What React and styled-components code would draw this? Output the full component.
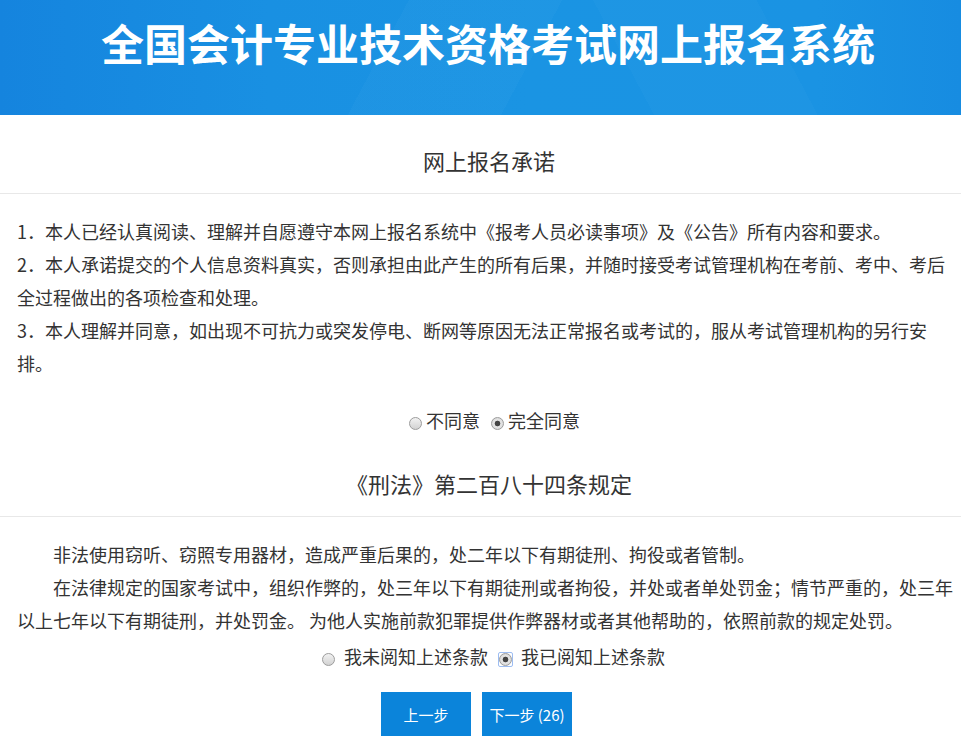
import React, { useState } from "react";
import styled, { createGlobalStyle, css } from "styled-components";

const GlobalStyle = createGlobalStyle`
  body {
    margin: 0;
    background: #fff;
    color: #333;
    font-family: "Noto Sans CJK SC", "Microsoft YaHei", "Liberation Sans", sans-serif;
  }
`;

const Header = styled.header`
  height: 115px;
  background:
    linear-gradient(118deg, transparent 0 40%, rgba(255, 255, 255, 0.025) 40% 55%, transparent 55%),
    linear-gradient(62deg, transparent 0 64%, rgba(255, 255, 255, 0.02) 64% 80%, transparent 80%),
    linear-gradient(90deg, #1584de 0%, #1990e2 28%, #1a94e3 55%, #1a93e3 85%, #178ce1 100%);
`;

const Title = styled.h1`
  margin: 0;
  padding: 21px 0 0 15px;
  font-size: 43px;
  line-height: 43px;
  font-weight: 700;
  color: #fff;
  text-align: center;
`;

const SectionTitle = styled.h2`
  margin: 0;
  padding: ${(p) => p.$top || 30}px 0 18px 17px;
  font-size: 22px;
  line-height: 30px;
  font-weight: 400;
  color: #333;
  text-align: center;
  border-bottom: 1px solid #e8e8e8;
`;

const Article = styled.div`
  margin-top: 21px;
  padding-left: 17px;
  font-size: 18px;
  line-height: 33px;
`;

const Para = styled.p`
  margin: 0;
  ${(p) =>
    p.$indent &&
    css`
      text-indent: 2em;
    `}
`;

const RadioRow = styled.div`
  display: flex;
  justify-content: center;
  align-items: center;
  height: 33px;
  margin-top: ${(p) => p.$top}px;
  padding-left: ${(p) => p.$shift}px;
  font-size: 18px;
`;

const Option = styled.label`
  display: inline-flex;
  align-items: center;
  margin-left: ${(p) => p.$gap || 0}px;
  cursor: pointer;
`;

const FocusRing = styled.span`
  display: inline-flex;
  margin-top: 7px;
  border: 1px solid #9dbdf2;
  border-radius: 2px;
`;

const Radio = styled.span`
  display: inline-block;
  box-sizing: border-box;
  width: 13px;
  height: 13px;
  margin-top: ${(p) => (p.$inRing ? 0 : 7)}px;
  border: 1px solid #9c9c9c;
  border-radius: 50%;
  background: linear-gradient(#f2f2f2, #d2d2d2);
  ${(p) =>
    p.$checked &&
    css`
      background: radial-gradient(circle, #444 0 2.5px, #e6e6e6 3.2px, #d0d0d0 100%);
    `}
`;

const OptionText = styled.span`
  margin-left: ${(p) => p.$space}px;
`;

const ButtonRow = styled.div`
  display: flex;
  justify-content: center;
  gap: 11px;
  margin-top: 20px;
  padding-right: 8px;
`;

const Button = styled.button`
  width: 90px;
  height: 44px;
  border: none;
  background: #0b84da;
  color: #fff;
  font-family: inherit;
  font-size: 15px;
  cursor: pointer;
`;

const RadioOption = ({ label, checked, focused, onSelect, gap, space }) => (
  <Option $gap={gap} onClick={onSelect}>
    {focused ? (
      <FocusRing>
        <Radio $checked={checked} $inRing />
      </FocusRing>
    ) : (
      <Radio $checked={checked} />
    )}
    <OptionText $space={space}>{label}</OptionText>
  </Option>
);

const App = () => {
  const [agree, setAgree] = useState("yes");
  const [read, setRead] = useState("yes");

  return (
    <>
      <GlobalStyle />
      <Header>
        <Title>全国会计专业技术资格考试网上报名系统</Title>
      </Header>

      <SectionTitle>网上报名承诺</SectionTitle>
      <Article>
        <Para>1．本人已经认真阅读、理解并自愿遵守本网上报名系统中《报考人员必读事项》及《公告》所有内容和要求。</Para>
        <Para>2．本人承诺提交的个人信息资料真实，否则承担由此产生的所有后果，并随时接受考试管理机构在考前、考中、考后全过程做出的各项检查和处理。</Para>
        <Para>3．本人理解并同意，如出现不可抗力或突发停电、断网等原因无法正常报名或考试的，服从考试管理机构的另行安排。</Para>
      </Article>
      <RadioRow $top={23} $shift={28}>
        <RadioOption label="不同意" space={4} checked={agree === "no"} onSelect={() => setAgree("no")} />
        <RadioOption label="完全同意" gap={11} space={4} checked={agree === "yes"} onSelect={() => setAgree("yes")} />
      </RadioRow>

      <SectionTitle $top={32}>《刑法》第二百八十四条规定</SectionTitle>
      <Article>
        <Para $indent>非法使用窃听、窃照专用器材，造成严重后果的，处二年以下有期徒刑、拘役或者管制。</Para>
        <Para $indent>在法律规定的国家考试中，组织作弊的，处三年以下有期徒刑或者拘役，并处或者单处罚金；情节严重的，处三年以上七年以下有期徒刑，并处罚金。 为他人实施前款犯罪提供作弊器材或者其他帮助的，依照前款的规定处罚。</Para>
      </Article>
      <RadioRow $top={2} $shift={26}>
        <RadioOption label="我未阅知上述条款" space={9} checked={read === "no"} onSelect={() => setRead("no")} />
        <RadioOption label="我已阅知上述条款" gap={10} space={8} checked={read === "yes"} focused onSelect={() => setRead("yes")} />
      </RadioRow>

      <ButtonRow>
        <Button>上一步</Button>
        <Button>下一步 (26)</Button>
      </ButtonRow>
    </>
  );
};

export default App;
